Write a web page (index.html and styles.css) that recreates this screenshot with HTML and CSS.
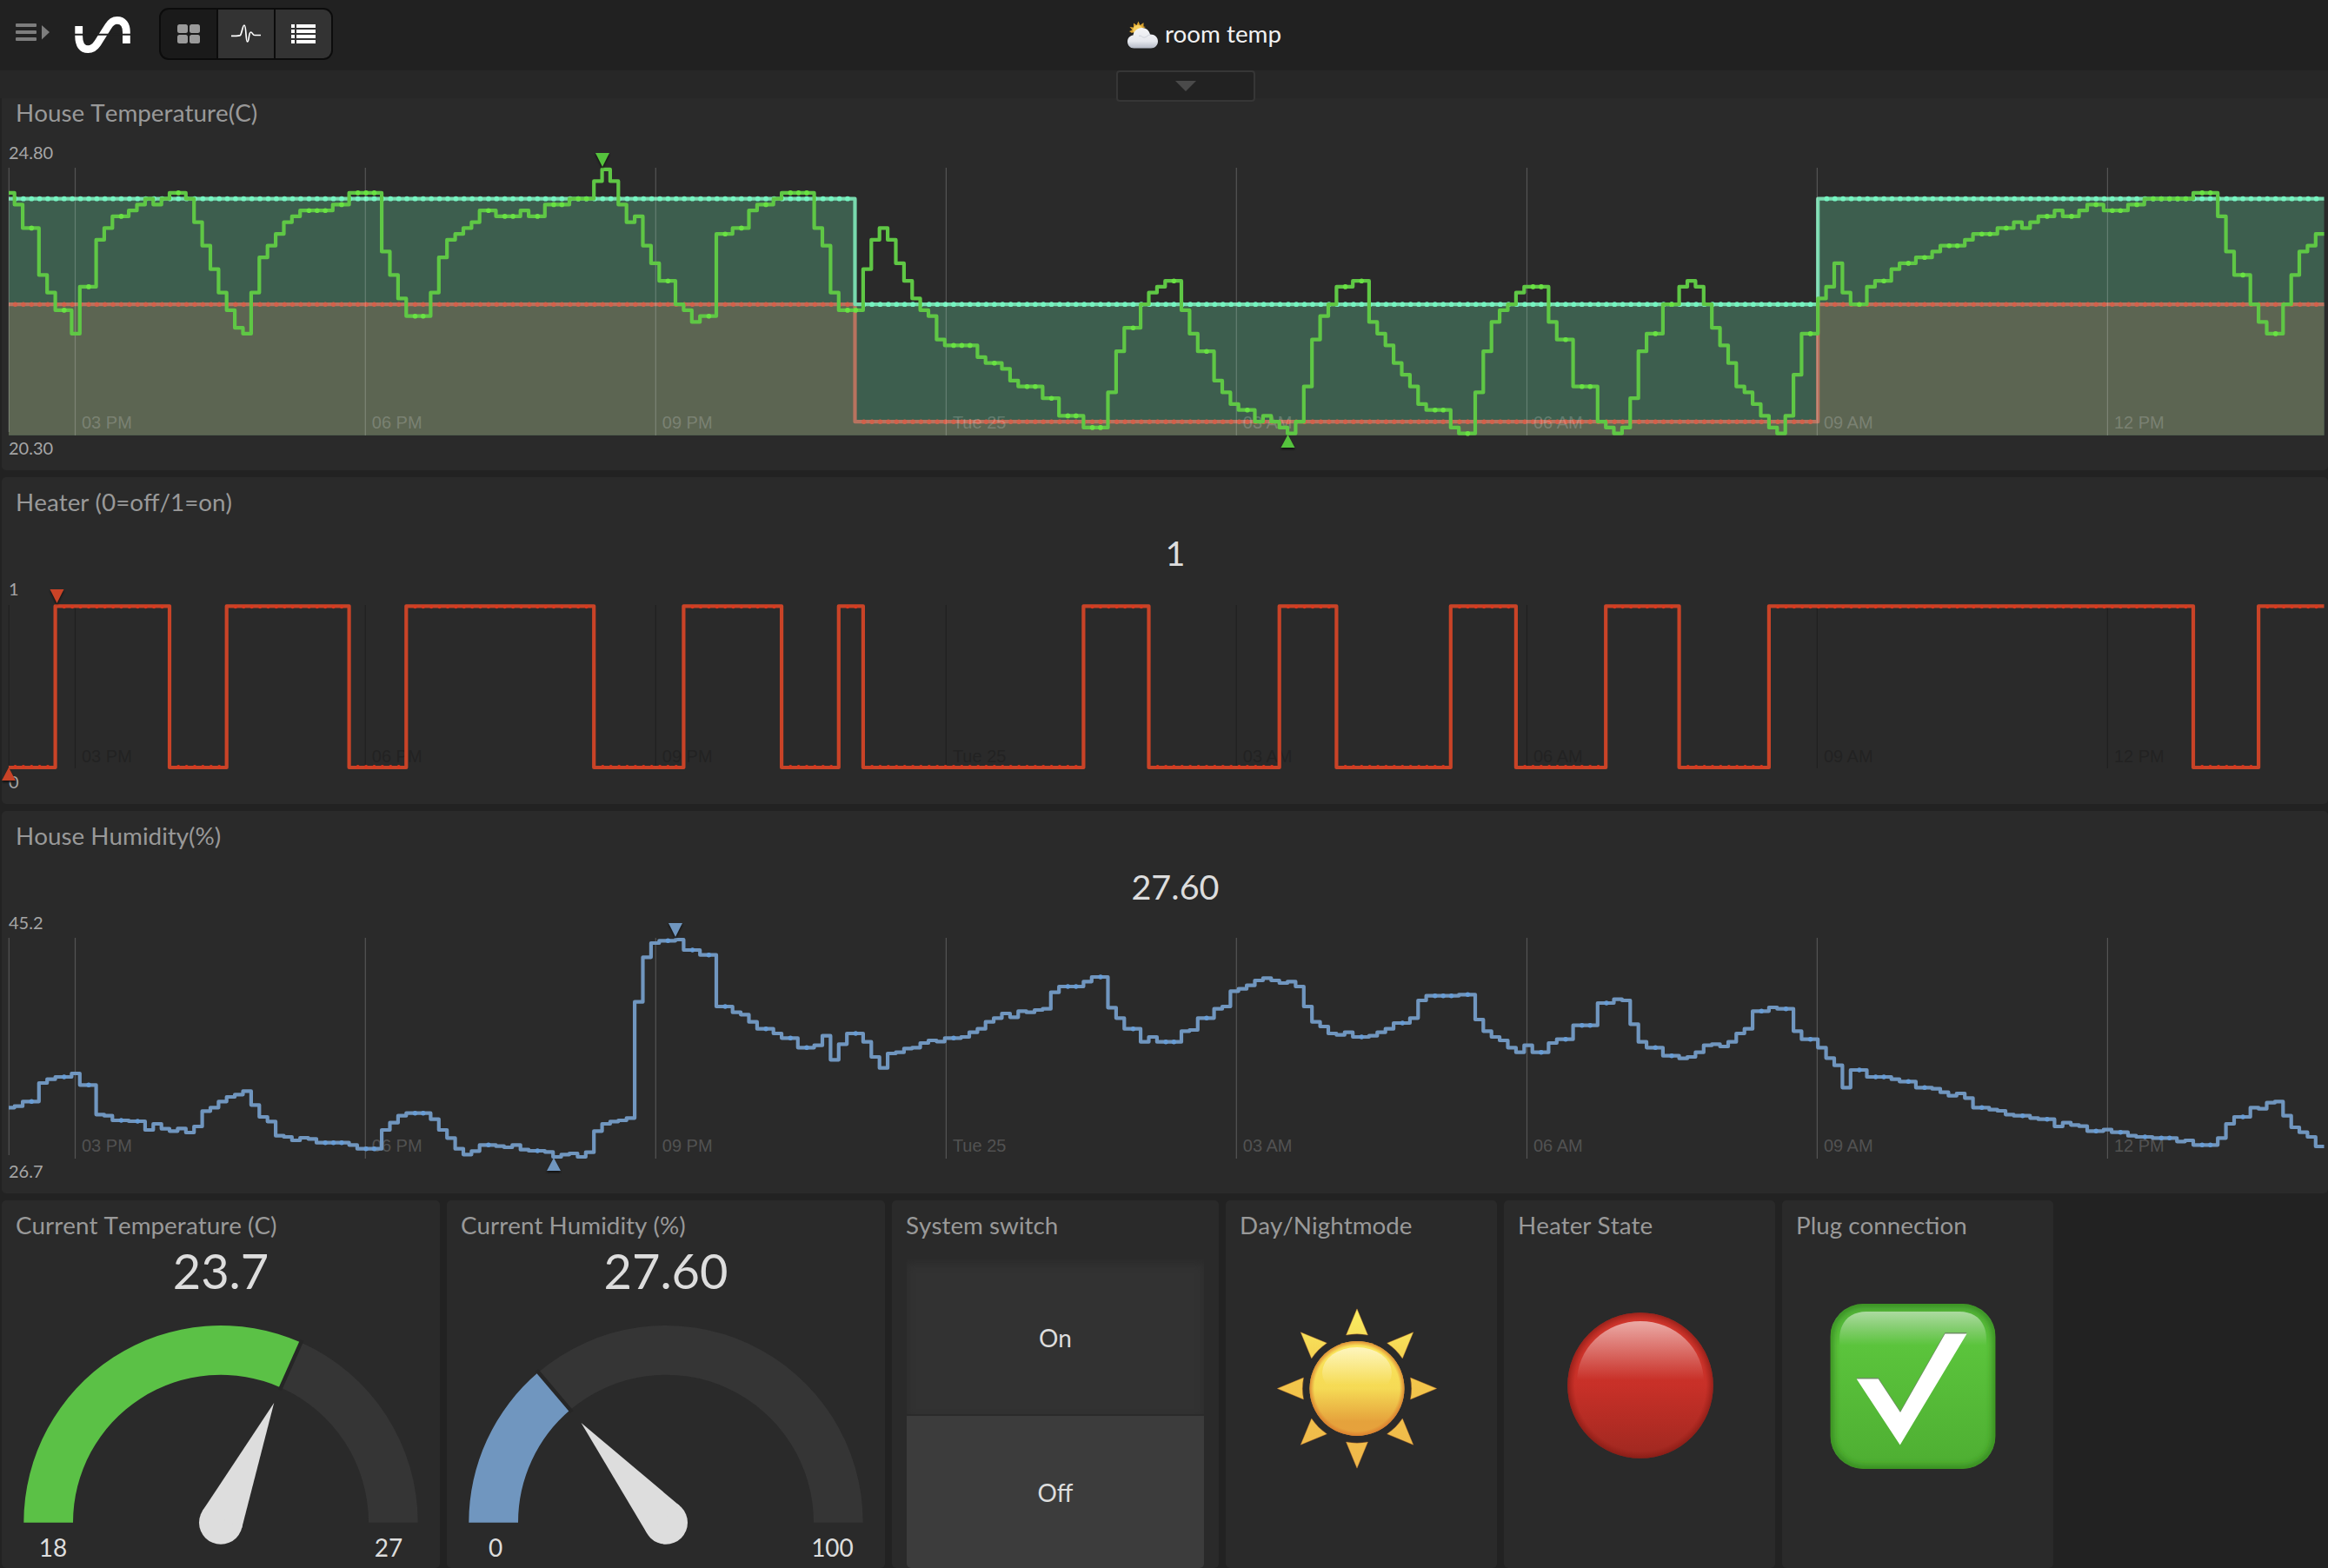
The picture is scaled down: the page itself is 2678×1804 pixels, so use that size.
FILE: index.html
```html
<!DOCTYPE html>
<html lang="en">
<head>
<meta charset="utf-8">
<title>room temp</title>
<link rel="stylesheet" href="styles.css">
</head>
<body>
<header class="topbar">
  <svg class="menu-icon" width="42" height="22" viewBox="17 26 42 22">
    <g fill="#7d7d7d"><rect x="18" y="27" width="24" height="4" rx="1"/><rect x="18" y="35" width="24" height="4" rx="1"/><rect x="18" y="43" width="24" height="4" rx="1"/><path d="M48 29L57 37L48 45.5Z"/></g>
  </svg>
  <svg class="logo" width="66" height="44" viewBox="86 18 66 44">
    <path d="M90.7 30V41.5C90.7 51.5 94.5 56.7 101.3 56.7C106 56.7 109 54.5 112 50L124.3 30.5C127 26 130.3 23.3 134.8 23.3C141.5 23.3 145.4 28.5 145.4 37V50" fill="none" stroke="#fff" stroke-width="8.8"/>
    <path d="M86 39.8H151" stroke="#212121" stroke-width="2"/>
  </svg>
  <nav class="views">
    <button class="view active"><svg width="26" height="22" viewBox="204 27 26 22"><g fill="#9a9a9a"><rect x="204" y="27" width="12" height="10" rx="2.5"/><rect x="218" y="27" width="12" height="10" rx="2.5"/><rect x="204" y="39" width="12" height="10" rx="2.5"/><rect x="218" y="39" width="12" height="10" rx="2.5"/></g></svg></button>
    <button class="view"><svg width="36" height="24" viewBox="265 25 36 24"><path d="M266 39.4C272 39.4 275 39.6 276.500 38.500C278.500 36 279 27 281 27C283.500 27 282.500 46 284.500 46C286.700 46 286 35 288.500 35C290.500 35 290.500 38.500 293 38.500H300" fill="none" stroke="#fff" stroke-width="1.700"/></svg></button>
    <button class="view"><svg width="30" height="22" viewBox="334 27 30 22"><path d="M335 29H339M341 29H363M335 35H339M341 35H363M335 41H339M341 41H363M335 47H339M341 47H363" stroke="#fff" stroke-width="4"/></svg></button>
  </nav>
  <h1 class="page-title">
    <svg width="36" height="33" viewBox="1296 24 36 33">
      <defs><linearGradient id="cloud" x1="0" y1="0" x2="0" y2="1"><stop offset="0" stop-color="#f4f5f7"/><stop offset=".65" stop-color="#e6e8ee"/><stop offset="1" stop-color="#b4bac6"/></linearGradient></defs>
      <path d="M1309.500 24.500L1311.500 29L1315.500 26L1315.500 30.500L1318 31L1302 38L1299 36L1302.500 34.500L1299.500 31L1304 31.500L1304 26.500L1307.500 29Z" fill="#d9a22e"/>
      <circle cx="1309" cy="34.500" r="5.700" fill="#f6cf60"/>
      <path d="M1304.500 55.500C1300 55.500 1297 52 1297 48C1297 43.800 1300 41 1303.500 40.600C1304.500 35.500 1308 32 1313.500 32C1318.500 32 1322 35 1323 39.500C1328.500 39.500 1332 43 1332 47.500C1332 52 1328.500 55.500 1324 55.500Z" fill="url(#cloud)"/>
      <path d="M1310 41.500C1313 40 1314 44 1317 43C1320 42.500 1320 40 1323 40" fill="none" stroke="#cfd3db" stroke-width="1"/>
    </svg>
    <span>room temp</span>
  </h1>
</header>
<div class="strip"><div class="drawer"><svg width="24" height="12" viewBox="0 0 24 12"><path d="M0 0H24L12 12Z" fill="#4a4a4a"/></svg></div></div>
<main class="board">
  <section class="card card-temp"><h2>House Temperature(C)</h2><svg id="temp" width="2676" height="380" viewBox="2 161 2676 380"></svg></section>
  <section class="card card-heater"><h2>Heater (0=off/1=on)</h2><svg id="heater" width="2676" height="316" viewBox="2 609 2676 316"></svg></section>
  <section class="card card-humidity"><h2>House Humidity(%)</h2><svg id="humidity" width="2676" height="380" viewBox="2 993 2676 380"></svg></section>
  <div class="row">
    <section class="card gauge"><h2>Current Temperature (C)</h2>
      <svg width="504" height="371" viewBox="2 1433 504 371" data-cx="254" data-ratio="0.6333" data-color="#5bc146">
        <text class="reading" x="254" y="1483">23.7</text><text class="limit" x="61" y="1791">18</text><text class="limit" x="447" y="1791">27</text>
      </svg></section>
    <section class="card gauge"><h2>Current Humidity (%)</h2>
      <svg width="504" height="371" viewBox="514 1433 504 371" data-cx="766" data-ratio="0.276" data-color="#7096bf">
        <text class="reading" x="766" y="1483">27.60</text><text class="limit" x="570" y="1791">0</text><text class="limit" x="957.500" y="1791">100</text>
      </svg></section>
    <section class="card switch"><h2>System switch</h2>
      <div class="switch-body"><button class="on">On</button><button class="off">Off</button></div></section>
    <section class="card state"><h2>Day/Nightmode</h2>
      <svg width="312" height="363" viewBox="1410 1441 312 363">
        <defs>
          <linearGradient id="disc" x1="0" y1="0" x2="0" y2="1"><stop offset="0" stop-color="#fbe75c"/><stop offset=".5" stop-color="#f5da55"/><stop offset=".85" stop-color="#e5a23c"/><stop offset="1" stop-color="#e6a23c"/></linearGradient>
          <linearGradient id="shine" x1="0" y1="0" x2="0" y2="1"><stop offset="0" stop-color="#fff" stop-opacity=".6"/><stop offset=".75" stop-color="#fff" stop-opacity="0"/></linearGradient>
          <radialGradient id="rim"><stop offset=".9" stop-color="#d8762a" stop-opacity="0"/><stop offset="1" stop-color="#d8762a" stop-opacity=".8"/></radialGradient>
          <linearGradient id="rays" gradientUnits="userSpaceOnUse" x1="0" y1="1506" x2="0" y2="1690"><stop offset="0" stop-color="#f9ee62"/><stop offset=".45" stop-color="#f3c64b"/><stop offset="1" stop-color="#efb74a"/></linearGradient>
        </defs>
        <g id="sunrays" fill="url(#rays)" stroke="#c9782c" stroke-width=".8" stroke-opacity=".5"></g>
        <circle cx="1561" cy="1597.500" r="54.500" fill="url(#disc)"/>
        <ellipse cx="1561" cy="1579" rx="40" ry="29" fill="url(#shine)"/>
        <circle cx="1561" cy="1597.500" r="54.500" fill="url(#rim)"/>
      </svg></section>
    <section class="card state"><h2>Heater State</h2>
      <svg width="312" height="363" viewBox="1730 1441 312 363">
        <defs>
          <linearGradient id="red" x1="0" y1="0" x2="0" y2="1"><stop offset="0" stop-color="#cf352b"/><stop offset=".5" stop-color="#c83028"/><stop offset="1" stop-color="#9f2820"/></linearGradient>
          <linearGradient id="redshine" gradientUnits="userSpaceOnUse" x1="0" y1="1520" x2="0" y2="1588"><stop offset="0" stop-color="#fff" stop-opacity=".58"/><stop offset="1" stop-color="#fff" stop-opacity="0"/></linearGradient>
          <radialGradient id="redrim"><stop offset=".9" stop-color="#8c1812" stop-opacity="0"/><stop offset="1" stop-color="#7c1812" stop-opacity=".65"/></radialGradient>
        </defs>
        <circle cx="1887" cy="1594" r="83.800" fill="url(#red)"/>
        <circle cx="1887" cy="1594" r="83.800" fill="url(#redrim)"/>
        <ellipse cx="1887" cy="1590" rx="73" ry="70" fill="url(#redshine)"/>
      </svg></section>
    <section class="card state"><h2>Plug connection</h2>
      <svg width="312" height="363" viewBox="2050 1441 312 363">
        <defs>
          <linearGradient id="green" x1="0" y1="0" x2="0" y2="1"><stop offset="0" stop-color="#52b13a"/><stop offset=".25" stop-color="#5bc43c"/><stop offset="1" stop-color="#4eae32"/></linearGradient>
          <linearGradient id="greenshine" x1="0" y1="0" x2="0" y2="1"><stop offset="0" stop-color="#fff" stop-opacity=".52"/><stop offset="1" stop-color="#fff" stop-opacity="0"/></linearGradient>
          <filter id="soft" x="-10%" y="-10%" width="120%" height="120%"><feGaussianBlur stdDeviation="3.500"/></filter>
          <clipPath id="tile"><rect x="2105.500" y="1500" width="190" height="190" rx="38"/></clipPath>
        </defs>
        <g clip-path="url(#tile)">
          <rect x="2105.500" y="1500" width="190" height="190" fill="url(#green)"/>
          <rect x="2105.500" y="1500" width="190" height="190" rx="38" fill="none" stroke="#2f7d1c" stroke-opacity=".75" stroke-width="8" filter="url(#soft)"/>
          <path d="M2116 1548V1541C2116 1521 2128 1509 2147 1509H2254C2273 1509 2285 1521 2285 1541V1548Z" fill="url(#greenshine)"/>
        </g>
        <path d="M2135.700 1586.500H2160.700L2186 1625L2237.500 1534.500H2262.500L2185.700 1662.500Z" fill="#6d8f63" transform="translate(0 -1.500)"/>
        <path d="M2135.700 1586.500H2160.700L2186 1625L2237.500 1534.500H2262.500L2185.700 1662.500Z" fill="#fff"/>
      </svg></section>
  </div>
</main>
<script src="charts.js"></script>
</body>
</html>
```
FILE: styles.css
```css
* { box-sizing: border-box; }
body {
  margin: 0;
  width: 2678px;
  height: 1804px;
  overflow: hidden;
  background: #222;
  font-family: Lato, "Liberation Sans", sans-serif;
}
svg { display: block; }
button { font: inherit; color: inherit; margin: 0; padding: 0; border: 0; }
.topbar {
  position: relative;
  display: flex;
  align-items: center;
  height: 81px;
  padding: 0 0 3px 17px;
  background: #212121;
}
.menu-icon { margin-top: -4px; }
.logo { margin: 2px 31px 0 27px; }
.views {
  display: flex;
  width: 200px;
  height: 60px;
  border: 2px solid #0c0c0c;
  border-radius: 11px;
  background: #0c0c0c;
  gap: 2px;
  overflow: hidden;
}
.view {
  flex: 1;
  display: flex;
  align-items: center;
  justify-content: center;
  background: #333;
}
.view.active { background: #1a1a1a; }
.page-title {
  display: flex;
  align-items: center;
  gap: 8px;
  margin: 0 0 0 913px;
  color: #f2f2f2;
  font-size: 27.8px;
  font-weight: 400;
  line-height: 34px;
}
.page-title svg { margin-top: 2px; }
.page-title span { margin-top: -1px; }
.strip {
  display: flex;
  height: 32px;
  padding-left: 1284px;
  background: #272727;
}
.drawer {
  z-index: 1;
  display: flex;
  justify-content: center;
  width: 160px;
  height: 36px;
  padding-top: 10px;
  border: 2px solid #363636;
  border-radius: 4px;
  background: #222;
}
.board {
  display: flex;
  flex-direction: column;
  gap: 8px;
  padding-left: 2px;
}
.card {
  flex: none;
  overflow: hidden;
  border-radius: 5px;
  background: #2a2a2a;
}
.card h2 {
  height: 60px;
  margin: 0;
  padding: 12px 0 0 16px;
  color: #999;
  font-size: 27.8px;
  font-weight: 400;
  font-kerning: none;
  line-height: 34px;
  white-space: nowrap;
}
.card-temp { height: 428px; border-radius: 0 0 5px 5px; }
.card-temp h2 { height: 48px; padding-top: 0; }
.card-heater { height: 376px; }
.card-humidity { height: 440px; }
.row { display: flex; gap: 8px; height: 423px; }
.gauge { width: 504px; }
.card.gauge h2 { height: 52px; }
.switch { width: 376px; }
.state { width: 312px; }
.switch-body {
  display: grid;
  grid-template-rows: 178px 175px;
  gap: 2px;
  margin: 8px 17px 0;
}
.switch-body button { color: #ddd; font-size: 28px; line-height: 34px; }
.switch-body .on {
  padding-top: 2px;
  background: #323232;
  box-shadow: inset 0 5px 10px #2b2b2b;
}
.off { background: #3c3c3c; border-radius: 0 0 5px 5px; }
.range { fill: #a6a6a6; font-size: 20px; }
.tick { font: 20px "Liberation Sans", sans-serif; fill: #fff; fill-opacity: .2; }
.grid { stroke: #fff; stroke-opacity: .2; stroke-width: 1.2; }
.dark .tick { fill: #202020; fill-opacity: .8; }
.dark .grid { stroke: #1f1f1f; stroke-opacity: .9; }
.value { fill: #ddd; font-size: 39.6px; text-anchor: middle; }
.reading { fill: #ddd; font-size: 56px; text-anchor: middle; }
.limit { fill: #ddd; font-size: 28px; text-anchor: middle; }
.line { fill: none; stroke-width: 4.2; stroke-linejoin: round; }
.marker { filter: drop-shadow(0 2px 1px #111); }
```
FILE: charts.js
```js
const X0 = 7.3, STEP = 9.387, LEFT = 10, RIGHT = 2673.5, LAST = 283;
const px = k => Math.max(LEFT, X0 + STEP * k);
const parse = s => s.trim().split(/\s+/).map(p => p.split(':').map(Number));

// Each series lists "sample:level" pairs, one for every change of value.
const TEMP = parse(`0:-1 1:1 2:5 4:13 5:16 6:19 8:23 9:15 11:7 12:5 13:3 15:2 16:1 17:0 18:1 19:0 20:-1 22:0 23:4 24:8 25:12 26:16 27:19 28:22 29:23 30:16 31:10 32:8 33:6 34:4 35:3 36:2 40:1 42:-1 46:9 47:13 48:17 49:20 52:16 53:10 54:7 55:6 56:5 57:4 58:2 60:3 63:2 64:3 66:1 69:0 72:-3 73:-5 74:-3 75:1 76:4 77:3 78:8 79:11 80:14 82:18 83:19 84:21 85:20 87:6 89:5 91:2 92:1 94:0 95:-1 99:5 100:8 101:16 102:19 105:12 106:7 107:5 108:7 109:11 110:14 111:17 112:19 113:20 114:24 115:25 119:27 120:28 122:29 123:31 124:32 127:34 129:37 132:39 135:33 136:26 137:22 139:18 140:16 141:15 142:14 144:19 145:23 146:26 148:31 149:33 150:35 151:36 153:38 154:37 155:38 156:39 157:40 158:38 159:32 160:24 161:20 162:18 163:15 165:14 167:21 168:23 169:25 170:28 171:30 172:32 173:35 174:36 177:39 178:40 180:33 181:26 182:21 183:19 184:18 185:16 186:15 189:21 190:24 192:32 195:38 196:39 197:40 198:39 199:34 200:26 201:23 203:18 205:15 206:14 207:15 208:18 209:22 210:25 211:28 212:32 213:33 214:35 215:37 216:39 217:40 218:37 219:30 220:23 222:17 223:15 224:11 225:16 226:18 228:15 229:14 231:12 232:11 234:10 236:9 237:8 240:7 241:6 244:5 246:4 247:5 248:4 249:3 251:2 252:3 254:2 255:1 257:2 260:1 262:0 268:-1 271:3 272:9 273:13 275:18 276:21 277:23 279:18 280:13 281:9 282:8 283:6`);
const HIGH = parse('0:0 104:18 222:0');
const LOW = parse('0:18 104:38 222:18');
const HEATER = parse('0:0 6:1 20:0 27:1 42:0 49:1 72:0 83:1 95:0 102:1 105:0 132:1 140:0 156:1 163:0 177:1 185:0 196:1 205:0 216:1 268:0 276:1');
const HUMIDITY = parse(`0:703 1:698 2:682 4:618 5:605 6:597 8:585 9:625 11:727 12:731 13:747 15:750 17:780 18:759 19:776 20:784 21:775 22:789 23:768 24:715 25:703 26:682 27:666 28:658 29:646 30:694 31:735 32:751 33:800 34:804 35:816 36:807 37:811 38:824 42:832 43:845 46:780 47:755 48:731 49:722 52:743 53:780 54:808 55:845 56:865 57:853 58:832 60:836 61:840 62:832 63:848 64:852 66:856 67:873 68:865 69:861 70:873 71:857 72:784 73:759 74:751 75:747 76:739 77:338 78:184 79:135 80:127 82:123 83:159 85:176 87:354 89:374 90:382 91:407 92:431 94:447 95:463 97:496 99:488 100:455 101:538 102:484 103:447 105:476 106:528 107:566 108:516 109:512 110:499 111:496 112:480 113:471 114:475 115:463 117:459 118:443 119:431 120:407 121:394 122:378 123:391 124:370 125:374 126:366 127:362 128:305 129:285 132:268 133:252 135:358 136:394 137:431 139:476 140:459 141:476 144:439 145:435 146:394 148:362 149:354 150:301 151:293 152:281 153:264 154:256 155:264 156:273 157:268 158:285 159:354 160:407 161:423 162:447 163:452 164:443 165:459 167:455 168:443 169:431 170:411 172:394 173:333 174:317 178:313 180:399 181:439 182:459 183:471 184:496 185:512 186:488 187:512 189:480 190:467 192:419 195:342 197:329 198:333 199:415 200:476 201:496 203:524 205:533 206:528 207:512 208:488 209:484 210:492 211:476 212:447 213:431 214:370 216:357 217:362 219:439 220:467 222:496 223:532 224:557 225:634 226:573 228:597 231:605 232:613 234:634 236:638 237:650 238:662 239:654 240:670 241:703 243:710 244:714 245:727 246:731 248:739 249:743 251:768 252:755 253:763 254:767 255:784 257:779 258:788 260:800 261:804 263:808 266:820 267:816 268:832 271:808 272:759 273:735 275:703 276:707 277:686 278:682 279:731 280:771 281:788 282:804 283:837`);

const stepPath = (s, y) => s.map(([k, v], i) => `${i ? 'H' + px(k).toFixed(1) + 'V' : 'M' + LEFT + ' '}${y(v).toFixed(1)}`).join('') + 'H' + RIGHT;
const area = (s, y, base, fill) => `<path d="${stepPath(s, y)}V${base}H${LEFT}Z" fill="${fill}"/>`;
function series(s, y, line, dot, r, dy = () => 0) {
  let dots = '';
  s.forEach(([k, v], i) => {
    const end = i + 1 < s.length ? s[i + 1][0] : LAST + 1;
    for (let j = k + 1; j < end; j++) dots += `<circle cx="${(px(j) + 0.8).toFixed(1)}" cy="${(y(v) + dy(v)).toFixed(1)}" r="${r}"/>`;
  });
  return `<path class="line" d="${stepPath(s, y)}" stroke="${line}"/><g fill="${dot}">${dots}</g>`;
}
const TICKS = [[86.5, '03 PM'], [420.3, '06 PM'], [754.3, '09 PM'], [1088.4, 'Tue 25'], [1422.3, '03 AM'], [1756.5, '06 AM'], [2090.4, '09 AM'], [2424.4, '12 PM']];
const grid = (top, bottom, base) => `<path class="grid" d="M10.3 ${top}V${bottom - 4}"/>` +
  TICKS.map(([x, t]) => `<path class="grid" d="M${x} ${top}V${bottom}"/><text class="tick" x="${x + 7.5}" y="${base}">${t}</text>`).join('');
const down = (x, y, c) => `<path class="marker" fill="${c}" d="M${x - 8} ${y}h16l-8 16z"/>`;
const up = (x, y, c) => `<path class="marker" fill="${c}" d="M${x - 8} ${y}h16l-8 -15z"/>`;
const range = (x, y, t) => `<text class="range" x="${x}" y="${y}">${t}</text>`;
const el = id => document.getElementById(id);

const ty = v => 228.7 + 6.75 * v;
el('temp').innerHTML = area(HIGH, ty, 500.8, '#3d5e4e') + area(LOW, ty, 500.8, '#5c6552') +
  series(LOW, ty, '#b8735f', '#d2614b', 2.7) + series(HIGH, ty, '#78d9ae', '#74f3c0', 2.9) +
  grid(193, 501, 492.7) + series(TEMP, ty, '#5fc745', '#69e243', 2.8) +
  down(693, 176, '#55c33d') + up(1481.5, 515, '#55c33d') + range(10, 182.7, '24.80') + range(10, 523, '20.30');

const hy = v => v ? 697.3 : 883;
el('heater').classList.add('dark');
el('heater').innerHTML = grid(696, 884, 877.3) + range(10, 685, '1') + range(10, 906.7, '0') +
  series(HEATER, hy, '#c94327', '#d9381f', 2, v => v ? 0.9 : -0.9) +
  down(65.5, 678, '#c94327') + up(10, 898, '#c94327') + '<text class="value" x="1352" y="651">1</text>';

const wy = v => 1040 + v / 3;
el('humidity').innerHTML = grid(1079, 1333, 1325) + series(HUMIDITY, wy, '#7096bf', '#689dd6', 2.7) +
  down(777, 1062, '#7096bf') + up(637, 1347, '#7096bf') + range(10, 1069.3, '45.2') + range(10, 1355, '26.7') +
  '<text class="value" x="1352" y="1035">27.60</text>';

// Half-circle gauges: track, filled part, divider and needle.
document.querySelectorAll('.gauge svg').forEach(svg => {
  const cx = +svg.dataset.cx, cy = 1751.7, R = 226.7, r = 170, a = Math.PI * svg.dataset.ratio;
  const pt = (d, t) => `${(cx - d * Math.cos(t)).toFixed(2)} ${(cy - d * Math.sin(t)).toFixed(2)}`;
  const ring = (s, e, c) => `<path fill="${c}" d="M${pt(R, s)}A${R} ${R} 0 0 1 ${pt(R, e)}L${pt(r, e)}A${r} ${r} 0 0 0 ${pt(r, s)}Z"/>`;
  svg.insertAdjacentHTML('beforeend', ring(0, a, svg.dataset.color) + ring(a, Math.PI, '#353535') +
    `<path d="M${pt(r - 3, a)}L${pt(R + 3, a)}" stroke="#262626" stroke-width="4.5"/>` +
    `<circle cx="${cx}" cy="${cy}" r="25" fill="#ddd"/><path fill="#ddd" d="M${pt(150.6, a)}L${pt(25, a + 1.4)}L${pt(25, a - 1.4)}Z"/>`);
});

// Eight identical rays turned around the centre of the sun.
el('sunrays').innerHTML = [0, 1, 2, 3, 4, 5, 6, 7].map(i => {
  const a = i * Math.PI / 4, p = (x, y) => `${(1561 + x * Math.cos(a) - y * Math.sin(a)).toFixed(1)} ${(1597.5 + x * Math.sin(a) + y * Math.cos(a)).toFixed(1)}`;
  return `<path d="M${p(0, -91.7)}L${p(12.5, -61.5)}Q${p(0, -64)} ${p(-12.5, -61.5)}Z"/>`;
}).join('');
```
